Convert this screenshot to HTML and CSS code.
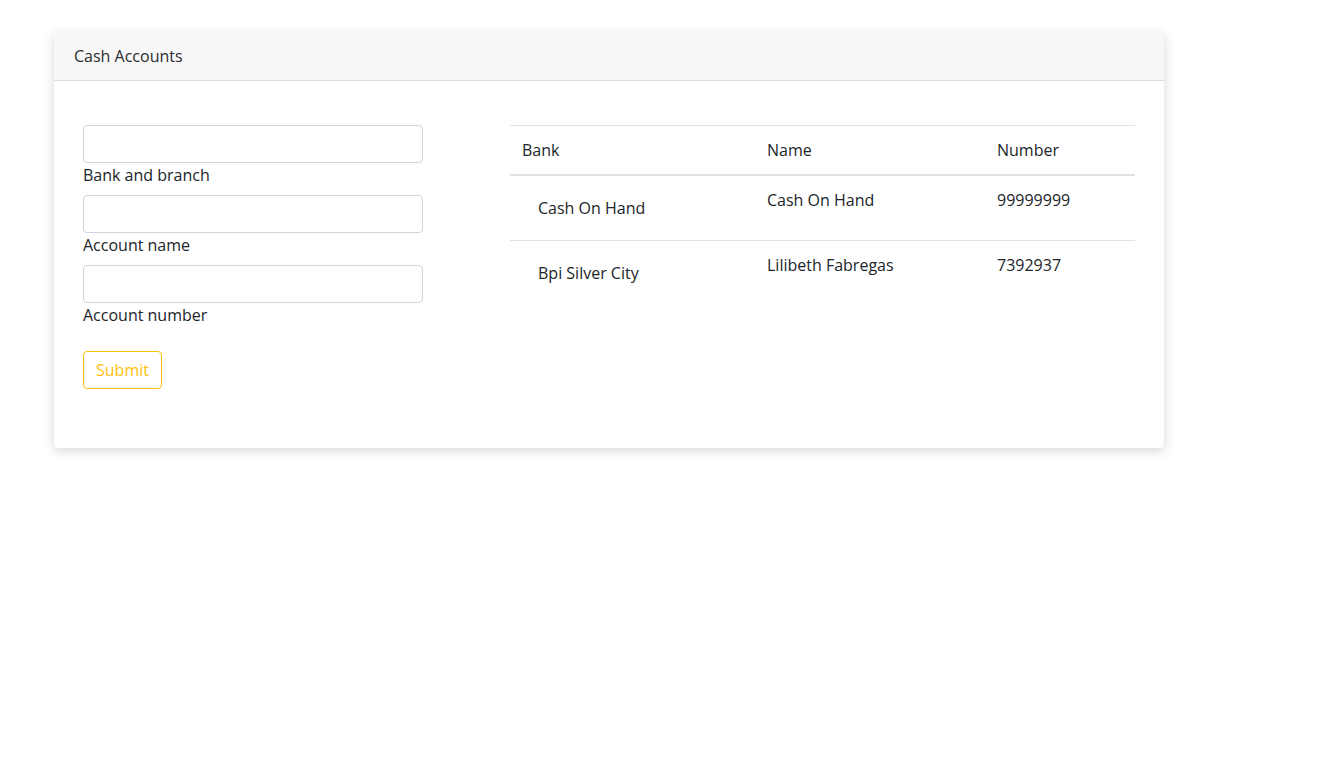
FILE: index.html
```html
<!DOCTYPE html>
<html>
<head>
<meta charset="utf-8">
<link rel="stylesheet" href="styles.css">
</head>
<body>
<div class="page">
  <div class="card">
    <div class="card-header">Cash Accounts</div>
    <div class="card-body">
      <form class="form">
        <div class="group">
          <input class="input" type="text">
          <label class="label">Bank and branch</label>
        </div>
        <div class="group">
          <input class="input" type="text">
          <label class="label">Account name</label>
        </div>
        <div class="group">
          <input class="input" type="text">
          <label class="label">Account number</label>
        </div>
        <button class="btn" type="button">Submit</button>
      </form>
      <table class="table">
        <thead>
          <tr><th class="c1">Bank</th><th class="c2">Name</th><th class="c3">Number</th></tr>
        </thead>
        <tbody>
          <tr><td><div class="bank">Cash On Hand</div></td><td>Cash On Hand</td><td>99999999</td></tr>
          <tr><td><div class="bank">Bpi Silver City</div></td><td>Lilibeth Fabregas</td><td>7392937</td></tr>
        </tbody>
      </table>
    </div>
  </div>
</div>
</body>
</html>
```
FILE: styles.css
```css
* { box-sizing: border-box; }
body {
  margin: 0;
  font-family: "Open Sans", "Liberation Sans", sans-serif;
  font-size: 16px;
  line-height: 24px;
  color: #212529;
  background: #fff;
}
.page { padding: 32px 0 60px 54px; }
.card {
  width: 1110px;
  background: #fff;
  border-radius: 4px;
  box-shadow: 0 3px 12px rgba(0,0,0,0.16);
}
.card-header {
  height: 49px;
  padding: 12px 20px;
  background: #f7f7f7;
  border-bottom: 1px solid #dcdcdc;
  border-radius: 4px 4px 0 0;
  font-weight: 500;
  font-size: 16px;
  color: #2a2d33;
}
.card-body {
  display: flex;
  align-items: flex-start;
  gap: 87px;
  padding: 44px 29px 59px 29px;
}
.form { width: 340px; display: flex; flex-direction: column; }
.group { display: flex; flex-direction: column; margin-bottom: 8px; }
.input {
  height: 38px;
  border: 1px solid #ced4da;
  border-radius: 4px;
  font: inherit;
  padding: 6px 12px;
}
.label { display: block; height: 24px; }
.btn {
  margin-top: 16px;
  align-self: flex-start;
  height: 38px;
  width: 79px;
  border: 1px solid #ffc107;
  border-radius: 4px;
  background: #fff;
  color: #ffc107;
  font: inherit;
  padding: 0;
}
.table {
  width: 625px;
  border-collapse: collapse;
  border-top: 1px solid #dee2e6;
}
.table th {
  text-align: left;
  font-weight: 500;
  padding: 12px;
  border-bottom: 2px solid #dee2e6;
}
.c1 { width: 245px; }
.c2 { width: 230px; }
.c3 { width: 150px; }
.table td {
  padding: 12px;
  vertical-align: top;
  border-bottom: 1px solid #dee2e6;
  height: 65px;
}
.table tbody tr:last-child td { border-bottom: none; }
.bank { padding: 8px 15px 8px 16px; }
```
